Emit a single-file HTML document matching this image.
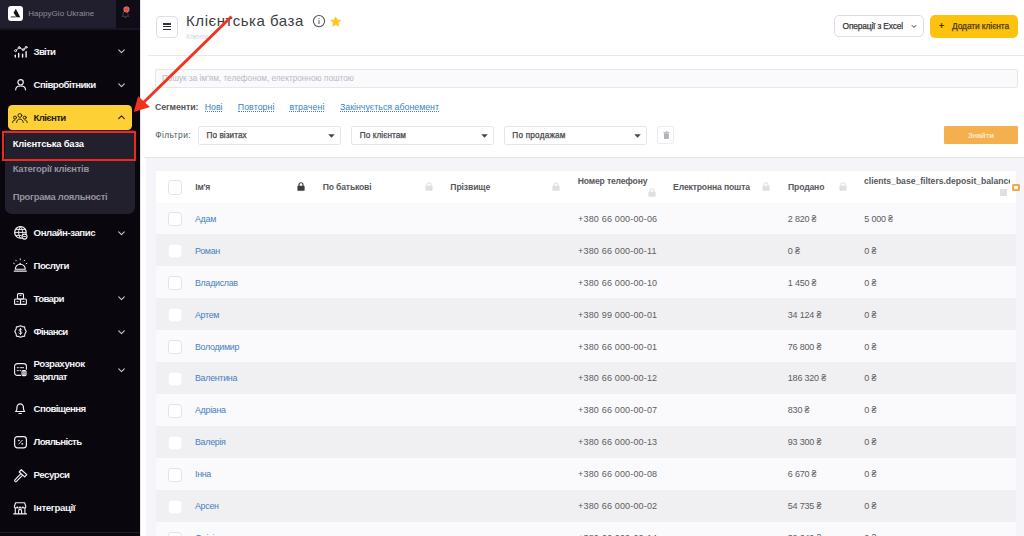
<!DOCTYPE html>
<html lang="uk">
<head>
<meta charset="utf-8">
<title>Клієнтська база</title>
<style>
*{box-sizing:border-box;margin:0;padding:0}
html,body{width:1024px;height:536px;overflow:hidden;background:#fff;font-family:"Liberation Sans",sans-serif}
body{position:relative}
.a,.t,svg{position:absolute}
.t{white-space:nowrap}
svg{overflow:visible}
</style>
</head>
<body>
<div class="a" style="left:140px;top:0px;width:1.2px;height:536px;background:#e2e2e8"></div>
<div class="a" style="left:155.5px;top:15.5px;width:22.5px;height:22.5px;border:1px solid #dedee3;border-radius:4px;background:#fff"></div>
<div class="a" style="left:163px;top:23.4px;width:7.6px;height:1.3px;background:#34343a"></div>
<div class="a" style="left:163px;top:26.2px;width:7.6px;height:1.3px;background:#34343a"></div>
<div class="a" style="left:163px;top:29px;width:7.6px;height:1.3px;background:#34343a"></div>
<svg style="left:312px;top:14px" width="14" height="14" viewBox="0 0 14 14"><circle cx="7" cy="7.1" r="5.6" fill="none" stroke="#55555b" stroke-width="1.1"/><rect x="6.5" y="6.2" width="1" height="3.8" fill="#55555b"/><rect x="6.5" y="4.1" width="1" height="1.1" fill="#55555b"/></svg>
<svg style="left:330.200px;top:15.600px" width="11.400" height="11.400" viewBox="0 0 24 24"><path d="M12 1.8l3.1 6.6 7.2.9-5.3 5 1.4 7.2L12 18l-6.4 3.500 1.4-7.2-5.3-5 7.200-.9z" fill="#fcc521" stroke="#fcc521" stroke-width="1.5" stroke-linejoin="round"/></svg>
<div class="a" style="left:833.8px;top:15.2px;width:90.4px;height:22.3px;border:1px solid #dcdce1;border-radius:5px;background:#fff"></div>
<svg style="left:910.5px;top:24px" width="6" height="5" viewBox="0 0 6 5"><path d="M0.8 1.2L3 3.4 5.2 1.2" fill="none" stroke="#38383e" stroke-width="1"/></svg>
<div class="a" style="left:929.9px;top:14.6px;width:88.2px;height:23.1px;border-radius:5px;background:#fdc20d"></div>
<div class="a" style="left:148px;top:55px;width:876px;height:1px;background:#e7e7ec"></div>
<div class="a" style="left:154.7px;top:68.5px;width:863.3px;height:19.2px;border:1px solid #e6e6eb;border-radius:2px;background:#fafafc"></div>
<div class="a" style="left:204.7px;top:111.2px;width:17.80000000000001px;height:0px;border-top:1px dotted #3b82c8"></div>
<div class="a" style="left:237.8px;top:111.2px;width:36.599999999999966px;height:0px;border-top:1px dotted #3b82c8"></div>
<div class="a" style="left:289.4px;top:111.2px;width:35.0px;height:0px;border-top:1px dotted #3b82c8"></div>
<div class="a" style="left:340px;top:111.2px;width:99px;height:0px;border-top:1px dotted #3b82c8"></div>
<div class="a" style="left:198.2px;top:125.6px;width:142.4px;height:19px;border:1px solid #e4e4e9;border-radius:2.5px;background:#fff"></div>
<svg style="left:327.6px;top:133.700px" width="7" height="3.800" viewBox="0 0 8 4"><path d="M0.3 0h7.400L4 4z" fill="#45454b"/></svg>
<div class="a" style="left:351.4px;top:125.6px;width:142.4px;height:19px;border:1px solid #e4e4e9;border-radius:2.5px;background:#fff"></div>
<svg style="left:480.79999999999995px;top:133.700px" width="7" height="3.800" viewBox="0 0 8 4"><path d="M0.3 0h7.400L4 4z" fill="#45454b"/></svg>
<div class="a" style="left:504.2px;top:125.6px;width:142.4px;height:19px;border:1px solid #e4e4e9;border-radius:2.5px;background:#fff"></div>
<svg style="left:633.6px;top:133.700px" width="7" height="3.800" viewBox="0 0 8 4"><path d="M0.3 0h7.400L4 4z" fill="#45454b"/></svg>
<div class="a" style="left:656.8px;top:126.3px;width:17.6px;height:18px;border:1px solid #ececf0;border-radius:2px;background:#fff"></div>
<svg style="left:662.600px;top:131px" width="6.800" height="8.200" viewBox="0 0 8 10"><path d="M1 2.800h6v6.200a.8.800 0 0 1-.8.800H1.800a.8.800 0 0 1-.8-.8z" fill="#b2b2b8"/><rect x="0.3" y="1.300" width="7.400" height="1" fill="#b2b2b8"/><rect x="2.800" y="0.4" width="2.400" height="1" fill="#b2b2b8"/></svg>
<div class="a" style="left:944px;top:125.7px;width:73.8px;height:18.5px;background:#f4b04f;border-radius:1px"></div>
<div class="a" style="left:144px;top:157px;width:880px;height:1px;background:#e5e5ea"></div>
<div class="a" style="left:146px;top:158px;width:878px;height:378px;background:#f4f4f9"></div>
<div class="a" style="left:156px;top:170.6px;width:860px;height:366px;background:#fff"></div>
<div class="a" style="left:156px;top:202px;width:860px;height:32px;background:#faf9fc"></div>
<div class="a" style="left:156px;top:234px;width:860px;height:32px;background:#f0eff1"></div>
<div class="a" style="left:156px;top:266px;width:860px;height:32px;background:#faf9fc"></div>
<div class="a" style="left:156px;top:298px;width:860px;height:32px;background:#f0eff1"></div>
<div class="a" style="left:156px;top:330px;width:860px;height:32px;background:#faf9fc"></div>
<div class="a" style="left:156px;top:362px;width:860px;height:32px;background:#f0eff1"></div>
<div class="a" style="left:156px;top:394px;width:860px;height:32px;background:#faf9fc"></div>
<div class="a" style="left:156px;top:426px;width:860px;height:32px;background:#f0eff1"></div>
<div class="a" style="left:156px;top:458px;width:860px;height:32px;background:#faf9fc"></div>
<div class="a" style="left:156px;top:490px;width:860px;height:32px;background:#f0eff1"></div>
<div class="a" style="left:156px;top:522px;width:860px;height:32px;background:#faf9fc"></div>
<div class="a" style="left:156px;top:170.6px;width:860px;height:32.6px;background:#fff"></div>
<div class="a" style="left:167.9px;top:180.1px;width:14.5px;height:14.5px;border:1px solid #e3e0ea;border-radius:3.5px;background:#fff"></div>
<div class="a" style="left:168px;top:212px;width:14.3px;height:14.3px;border:1px solid #e3e0ea;border-radius:3.5px;background:#fff"></div>
<div class="a" style="left:168px;top:244px;width:14.3px;height:14.3px;border:1px solid #f3f3f5;border-radius:3.5px;background:#fff"></div>
<div class="a" style="left:168px;top:276px;width:14.3px;height:14.3px;border:1px solid #e3e0ea;border-radius:3.5px;background:#fff"></div>
<div class="a" style="left:168px;top:308px;width:14.3px;height:14.3px;border:1px solid #f3f3f5;border-radius:3.5px;background:#fff"></div>
<div class="a" style="left:168px;top:340px;width:14.3px;height:14.3px;border:1px solid #e3e0ea;border-radius:3.5px;background:#fff"></div>
<div class="a" style="left:168px;top:372px;width:14.3px;height:14.3px;border:1px solid #f3f3f5;border-radius:3.5px;background:#fff"></div>
<div class="a" style="left:168px;top:404px;width:14.3px;height:14.3px;border:1px solid #e3e0ea;border-radius:3.5px;background:#fff"></div>
<div class="a" style="left:168px;top:436px;width:14.3px;height:14.3px;border:1px solid #f3f3f5;border-radius:3.5px;background:#fff"></div>
<div class="a" style="left:168px;top:468px;width:14.3px;height:14.3px;border:1px solid #e3e0ea;border-radius:3.5px;background:#fff"></div>
<div class="a" style="left:168px;top:500px;width:14.3px;height:14.3px;border:1px solid #f3f3f5;border-radius:3.5px;background:#fff"></div>
<div class="a" style="left:168px;top:532px;width:14.3px;height:14.3px;border:1px solid #e3e0ea;border-radius:3.5px;background:#fff"></div>
<svg style="left:297.1px;top:182.3px" width="8" height="9" viewBox="0 0 8 9"><rect x="0.4" y="3.800" width="7.200" height="5" rx="0.9" fill="#3c3c42"/><path d="M2 4.200V2.700a2 2 0 0 1 4 0V4.200" fill="none" stroke="#3c3c42" stroke-width="1.150"/></svg>
<svg style="left:424.6px;top:182.3px" width="8" height="9" viewBox="0 0 8 9"><rect x="0.4" y="3.800" width="7.200" height="5" rx="0.9" fill="#dfdfe3"/><path d="M2 4.200V2.700a2 2 0 0 1 4 0V4.200" fill="none" stroke="#dfdfe3" stroke-width="1.150"/></svg>
<svg style="left:552.2px;top:182.3px" width="8" height="9" viewBox="0 0 8 9"><rect x="0.4" y="3.800" width="7.200" height="5" rx="0.9" fill="#dfdfe3"/><path d="M2 4.200V2.700a2 2 0 0 1 4 0V4.200" fill="none" stroke="#dfdfe3" stroke-width="1.150"/></svg>
<svg style="left:647.8px;top:188px" width="8" height="9" viewBox="0 0 8 9"><rect x="0.4" y="3.800" width="7.200" height="5" rx="0.9" fill="#dfdfe3"/><path d="M2 4.200V2.700a2 2 0 0 1 4 0V4.200" fill="none" stroke="#dfdfe3" stroke-width="1.150"/></svg>
<svg style="left:762.3px;top:182.3px" width="8" height="9" viewBox="0 0 8 9"><rect x="0.4" y="3.800" width="7.200" height="5" rx="0.9" fill="#dfdfe3"/><path d="M2 4.200V2.700a2 2 0 0 1 4 0V4.200" fill="none" stroke="#dfdfe3" stroke-width="1.150"/></svg>
<svg style="left:838.6px;top:182.3px" width="8" height="9" viewBox="0 0 8 9"><rect x="0.4" y="3.800" width="7.200" height="5" rx="0.9" fill="#dfdfe3"/><path d="M2 4.200V2.700a2 2 0 0 1 4 0V4.200" fill="none" stroke="#dfdfe3" stroke-width="1.150"/></svg>
<div class="a" style="left:1000px;top:188.6px;width:7px;height:7px;background:#e0e0e4"></div>
<div class="a" style="left:1012.4px;top:184px;width:7.4px;height:7px;border:2.700px solid #f0a848;background:#fff;border-radius:1.5px"></div>
<div class="t" style="left:186.1px;top:10px;font-size:15px;line-height:21px;color:#3c3c42;letter-spacing:0.527px;">Клієнтська база</div>
<div class="t" style="left:186px;top:32px;font-size:7px;line-height:10px;color:#d4d4dc;letter-spacing:-0.380px;">Клієнти</div>
<div class="t" style="left:842.6px;top:20px;font-size:8.4px;line-height:12px;color:#38383e;letter-spacing:-0.166px;-webkit-text-stroke:0.25px #38383e;">Операції з Excel</div>
<div class="t" style="left:938.8px;top:19px;font-size:9.5px;line-height:13px;color:#3d3005;font-weight:bold;">+</div>
<div class="t" style="left:952px;top:20px;font-size:8.4px;line-height:12px;color:#4a3b08;letter-spacing:-0.081px;-webkit-text-stroke:0.25px #4a3b08;">Додати клієнта</div>
<div class="t" style="left:161.9px;top:73px;font-size:8.2px;line-height:11px;color:#b9b9c1;letter-spacing:0.024px;">Пошук за ім'ям, телефоном, електронною поштою</div>
<div class="t" style="left:155px;top:101px;font-size:8.8px;line-height:12px;color:#55555b;font-weight:bold;letter-spacing:-0.110px;">Сегменти:</div>
<div class="t" style="left:204.7px;top:101px;font-size:8.8px;line-height:12px;color:#3b82c8;letter-spacing:-0.025px;">Нові</div>
<div class="t" style="left:237.8px;top:101px;font-size:8.8px;line-height:12px;color:#3b82c8;letter-spacing:0.052px;">Повторні</div>
<div class="t" style="left:289.4px;top:101px;font-size:8.8px;line-height:12px;color:#3b82c8;letter-spacing:0.087px;">втрачені</div>
<div class="t" style="left:340px;top:101px;font-size:8.8px;line-height:12px;color:#3b82c8;">Закінчується абонемент</div>
<div class="t" style="left:155.2px;top:129px;font-size:8.4px;line-height:12px;color:#55555b;letter-spacing:0.439px;">Фільтри:</div>
<div class="t" style="left:206.6px;top:130px;font-size:8.2px;line-height:11px;color:#47474d;letter-spacing:0.054px;-webkit-text-stroke:0.25px #47474d;">По візитах</div>
<div class="t" style="left:359.7px;top:130px;font-size:8.2px;line-height:11px;color:#47474d;letter-spacing:0.077px;-webkit-text-stroke:0.25px #47474d;">По клієнтам</div>
<div class="t" style="left:512.3px;top:130px;font-size:8.2px;line-height:11px;color:#47474d;letter-spacing:0.212px;-webkit-text-stroke:0.25px #47474d;">По продажам</div>
<div class="t" style="left:968px;top:130px;font-size:7.8px;line-height:11px;color:#fbe5c4;font-weight:bold;letter-spacing:-0.269px;">Знайти</div>
<div class="t" style="left:195.3px;top:181px;font-size:8.6px;line-height:12px;color:#58585e;font-weight:bold;letter-spacing:-0.304px;">Ім'я</div>
<div class="t" style="left:322.8px;top:181px;font-size:8.6px;line-height:12px;color:#58585e;font-weight:bold;letter-spacing:-0.172px;">По батькові</div>
<div class="t" style="left:450.3px;top:181px;font-size:8.6px;line-height:12px;color:#58585e;font-weight:bold;letter-spacing:-0.098px;">Прізвище</div>
<div class="t" style="left:577.8px;top:175px;font-size:8.6px;line-height:12px;color:#58585e;font-weight:bold;letter-spacing:-0.166px;">Номер телефону</div>
<div class="t" style="left:673.1px;top:181px;font-size:8.6px;line-height:12px;color:#58585e;font-weight:bold;letter-spacing:-0.141px;">Електронна пошта</div>
<div class="t" style="left:788.1px;top:181px;font-size:8.6px;line-height:12px;color:#58585e;font-weight:bold;letter-spacing:-0.158px;">Продано</div>
<div class="t" style="left:864px;top:175px;font-size:8.6px;line-height:12px;color:#58585e;font-weight:bold;letter-spacing:-0.015px;width:145.7px;overflow:hidden;">clients_base_filters.deposit_balance</div>
<div class="t" style="left:195px;top:213px;font-size:8.9px;line-height:12px;color:#4583c2;letter-spacing:-0.300px;">Адам</div>
<div class="t" style="left:578.1px;top:213px;font-size:9px;line-height:13px;color:#5d5d63;letter-spacing:0.170px;">+380 66 000-00-06</div>
<div class="t" style="left:787.8px;top:213px;font-size:9px;line-height:13px;color:#5d5d63;letter-spacing:-0.200px;">2 820 ₴</div>
<div class="t" style="left:864.3px;top:213px;font-size:9px;line-height:13px;color:#5d5d63;letter-spacing:-0.200px;">5 000 ₴</div>
<div class="t" style="left:195px;top:245px;font-size:8.9px;line-height:12px;color:#4583c2;letter-spacing:-0.300px;">Роман</div>
<div class="t" style="left:578.1px;top:245px;font-size:9px;line-height:13px;color:#5d5d63;letter-spacing:0.170px;">+380 66 000-00-11</div>
<div class="t" style="left:787.8px;top:245px;font-size:9px;line-height:13px;color:#5d5d63;letter-spacing:-0.200px;">0 ₴</div>
<div class="t" style="left:864.3px;top:245px;font-size:9px;line-height:13px;color:#5d5d63;letter-spacing:-0.200px;">0 ₴</div>
<div class="t" style="left:195px;top:277px;font-size:8.9px;line-height:12px;color:#4583c2;letter-spacing:-0.300px;">Владислав</div>
<div class="t" style="left:578.1px;top:277px;font-size:9px;line-height:13px;color:#5d5d63;letter-spacing:0.170px;">+380 66 000-00-10</div>
<div class="t" style="left:787.8px;top:277px;font-size:9px;line-height:13px;color:#5d5d63;letter-spacing:-0.200px;">1 450 ₴</div>
<div class="t" style="left:864.3px;top:277px;font-size:9px;line-height:13px;color:#5d5d63;letter-spacing:-0.200px;">0 ₴</div>
<div class="t" style="left:195px;top:309px;font-size:8.9px;line-height:12px;color:#4583c2;letter-spacing:-0.300px;">Артем</div>
<div class="t" style="left:578.1px;top:309px;font-size:9px;line-height:13px;color:#5d5d63;letter-spacing:0.170px;">+380 99 000-00-01</div>
<div class="t" style="left:787.8px;top:309px;font-size:9px;line-height:13px;color:#5d5d63;letter-spacing:-0.200px;">34 124 ₴</div>
<div class="t" style="left:864.3px;top:309px;font-size:9px;line-height:13px;color:#5d5d63;letter-spacing:-0.200px;">0 ₴</div>
<div class="t" style="left:195px;top:341px;font-size:8.9px;line-height:12px;color:#4583c2;letter-spacing:-0.300px;">Володимир</div>
<div class="t" style="left:578.1px;top:341px;font-size:9px;line-height:13px;color:#5d5d63;letter-spacing:0.170px;">+380 66 000-00-01</div>
<div class="t" style="left:787.8px;top:341px;font-size:9px;line-height:13px;color:#5d5d63;letter-spacing:-0.200px;">76 800 ₴</div>
<div class="t" style="left:864.3px;top:341px;font-size:9px;line-height:13px;color:#5d5d63;letter-spacing:-0.200px;">0 ₴</div>
<div class="t" style="left:195px;top:372px;font-size:8.9px;line-height:12px;color:#4583c2;letter-spacing:-0.300px;">Валентина</div>
<div class="t" style="left:578.1px;top:372px;font-size:9px;line-height:13px;color:#5d5d63;letter-spacing:0.170px;">+380 66 000-00-12</div>
<div class="t" style="left:787.8px;top:372px;font-size:9px;line-height:13px;color:#5d5d63;letter-spacing:-0.200px;">186 320 ₴</div>
<div class="t" style="left:864.3px;top:372px;font-size:9px;line-height:13px;color:#5d5d63;letter-spacing:-0.200px;">0 ₴</div>
<div class="t" style="left:195px;top:404px;font-size:8.9px;line-height:12px;color:#4583c2;letter-spacing:-0.300px;">Адріана</div>
<div class="t" style="left:578.1px;top:404px;font-size:9px;line-height:13px;color:#5d5d63;letter-spacing:0.170px;">+380 66 000-00-07</div>
<div class="t" style="left:787.8px;top:404px;font-size:9px;line-height:13px;color:#5d5d63;letter-spacing:-0.200px;">830 ₴</div>
<div class="t" style="left:864.3px;top:404px;font-size:9px;line-height:13px;color:#5d5d63;letter-spacing:-0.200px;">0 ₴</div>
<div class="t" style="left:195px;top:436px;font-size:8.9px;line-height:12px;color:#4583c2;letter-spacing:-0.300px;">Валерія</div>
<div class="t" style="left:578.1px;top:436px;font-size:9px;line-height:13px;color:#5d5d63;letter-spacing:0.170px;">+380 66 000-00-13</div>
<div class="t" style="left:787.8px;top:436px;font-size:9px;line-height:13px;color:#5d5d63;letter-spacing:-0.200px;">93 300 ₴</div>
<div class="t" style="left:864.3px;top:436px;font-size:9px;line-height:13px;color:#5d5d63;letter-spacing:-0.200px;">0 ₴</div>
<div class="t" style="left:195px;top:468px;font-size:8.9px;line-height:12px;color:#4583c2;letter-spacing:-0.300px;">Інна</div>
<div class="t" style="left:578.1px;top:468px;font-size:9px;line-height:13px;color:#5d5d63;letter-spacing:0.170px;">+380 66 000-00-08</div>
<div class="t" style="left:787.8px;top:468px;font-size:9px;line-height:13px;color:#5d5d63;letter-spacing:-0.200px;">6 670 ₴</div>
<div class="t" style="left:864.3px;top:468px;font-size:9px;line-height:13px;color:#5d5d63;letter-spacing:-0.200px;">0 ₴</div>
<div class="t" style="left:195px;top:500px;font-size:8.9px;line-height:12px;color:#4583c2;letter-spacing:-0.300px;">Арсен</div>
<div class="t" style="left:578.1px;top:500px;font-size:9px;line-height:13px;color:#5d5d63;letter-spacing:0.170px;">+380 66 000-00-02</div>
<div class="t" style="left:787.8px;top:500px;font-size:9px;line-height:13px;color:#5d5d63;letter-spacing:-0.200px;">54 735 ₴</div>
<div class="t" style="left:864.3px;top:500px;font-size:9px;line-height:13px;color:#5d5d63;letter-spacing:-0.200px;">0 ₴</div>
<div class="t" style="left:195px;top:532px;font-size:8.9px;line-height:12px;color:#4583c2;letter-spacing:-0.300px;">Олівія</div>
<div class="t" style="left:578.1px;top:532px;font-size:9px;line-height:13px;color:#5d5d63;letter-spacing:0.170px;">+380 66 000-00-14</div>
<div class="t" style="left:787.8px;top:532px;font-size:9px;line-height:13px;color:#5d5d63;letter-spacing:-0.200px;">32 640 ₴</div>
<div class="t" style="left:864.3px;top:532px;font-size:9px;line-height:13px;color:#5d5d63;letter-spacing:-0.200px;">0 ₴</div>
<div class="a" style="left:0px;top:0px;width:140px;height:536px;background:#09070d"></div>
<div class="a" style="left:0px;top:0px;width:116px;height:28px;background:#211f2e"></div>
<div class="a" style="left:116px;top:0px;width:24px;height:28px;background:#0f0c15"></div>
<div class="a" style="left:0px;top:28px;width:140px;height:1.5px;background:#17151e"></div>
<div class="a" style="left:7.6px;top:5.5px;width:15.5px;height:15.5px;background:#fff;border-radius:3.2px"></div>
<svg style="left:7.600px;top:5.500px" width="15.500" height="15.500" viewBox="0 0 15.500 15.500"><path d="M7.800 2.700L12.300 11.300H8.500L5.600 6.700z" fill="#15131c"/><rect x="2.800" y="10.500" width="5" height=".85" fill="#15131c"/></svg>
<svg style="left:120.500px;top:9.500px" width="9" height="9" viewBox="0 0 9 9"><path d="M1.200 6.300c.9-.6.900-1.600.9-2.700a2.400 2.400 0 0 1 4.800 0c0 1.100 0 2.100.9 2.700z" fill="none" stroke="#4b4959" stroke-width=".9" stroke-linejoin="round"/><path d="M3.700 7.700h1.600" stroke="#4b4959" stroke-width=".9"/></svg>
<div class="a" style="left:124.2px;top:7.1px;width:4.8px;height:4.8px;background:#f2463b;border-radius:50%;box-shadow:0 0 0 0.400px #cbb9a8"></div>
<div class="a" style="left:8px;top:105.4px;width:124.2px;height:24.8px;border-radius:4.500px;background:#fdd035"></div>
<div class="a" style="left:5.2px;top:130.2px;width:129.6px;height:83.5px;border-radius:0 0 7px 7px;background:#22202c"></div>
<div class="a" style="left:0px;top:532px;width:140px;height:1px;background:#201e28"></div>
<svg style="left:117.500px;top:49.0px" width="7" height="4.600" viewBox="0 0 7 4.600"><path d="M0.700 0.900L3.500 3.700 6.300 0.900" fill="none" stroke="#c9c9d1" stroke-width="1.100" stroke-linecap="round" stroke-linejoin="round"/></svg>
<svg style="left:117.500px;top:82.9px" width="7" height="4.600" viewBox="0 0 7 4.600"><path d="M0.700 0.900L3.500 3.700 6.300 0.900" fill="none" stroke="#c9c9d1" stroke-width="1.100" stroke-linecap="round" stroke-linejoin="round"/></svg>
<svg style="left:117.500px;top:230.5px" width="7" height="4.600" viewBox="0 0 7 4.600"><path d="M0.700 0.900L3.500 3.700 6.300 0.900" fill="none" stroke="#c9c9d1" stroke-width="1.100" stroke-linecap="round" stroke-linejoin="round"/></svg>
<svg style="left:117.500px;top:296.4px" width="7" height="4.600" viewBox="0 0 7 4.600"><path d="M0.700 0.900L3.500 3.700 6.300 0.900" fill="none" stroke="#c9c9d1" stroke-width="1.100" stroke-linecap="round" stroke-linejoin="round"/></svg>
<svg style="left:117.500px;top:329.7px" width="7" height="4.600" viewBox="0 0 7 4.600"><path d="M0.700 0.900L3.500 3.700 6.300 0.900" fill="none" stroke="#c9c9d1" stroke-width="1.100" stroke-linecap="round" stroke-linejoin="round"/></svg>
<svg style="left:117.500px;top:367.7px" width="7" height="4.600" viewBox="0 0 7 4.600"><path d="M0.700 0.900L3.500 3.700 6.300 0.900" fill="none" stroke="#c9c9d1" stroke-width="1.100" stroke-linecap="round" stroke-linejoin="round"/></svg>
<svg style="left:117.500px;top:115.3px" width="7" height="4.600" viewBox="0 0 7 4.600"><path d="M0.700 3.700L3.500 0.900 6.300 3.700" fill="none" stroke="#2b2408" stroke-width="1.100" stroke-linecap="round" stroke-linejoin="round"/></svg>
<svg style="left:13.6px;top:45.6px" width="13.4" height="11.6" viewBox="0 0 13.400 11.600" fill="none" stroke="#f2f2f5" stroke-width="1.1" stroke-linecap="round" stroke-linejoin="round"><path d="M1.300 11.100V9.100M4.700 11.100V7.500M8.600 11.100V8.300M12.100 11.100V5.800" stroke-width="1.400"/><path d="M2.300 4.100L4.500 2.200M5.900 2.100L8.500 3.400M9.900 3.100L11.500 1.800" stroke-width=".9"/><circle cx="1.600" cy="4.700" r="1" stroke-width=".9"/><circle cx="5.200" cy="1.600" r="1" stroke-width=".9"/><circle cx="9.200" cy="3.700" r="1" stroke-width=".9"/><circle cx="12.100" cy="1.300" r="1" stroke-width=".9"/></svg>
<svg style="left:15px;top:79.2px" width="11.2" height="11.4" viewBox="0 0 11.200 11.400" fill="none" stroke="#f2f2f5" stroke-width="1.2" stroke-linecap="round" stroke-linejoin="round"><circle cx="5.600" cy="3.300" r="2.700"/><path d="M0.700 10.800c0-2.500 2-3.800 4.900-3.800s4.900 1.300 4.900 3.800"/></svg>
<svg style="left:12.4px;top:112.7px" width="15.8" height="10" viewBox="0 0 15.800 10" fill="none" stroke="#2b2408" stroke-width="1" stroke-linecap="round" stroke-linejoin="round"><circle cx="7.900" cy="2.500" r="1.900"/><circle cx="3" cy="4.600" r="1.500"/><circle cx="12.800" cy="4.600" r="1.500"/><path d="M4.600 9.500c0-2.100 1.400-3.400 3.300-3.400s3.300 1.300 3.300 3.400M0.600 9.500c0-1.500.9-2.400 2.300-2.500M15.200 9.500c0-1.500-.9-2.400-2.300-2.500"/></svg>
<svg style="left:13.8px;top:226.2px" width="13.6" height="13.6" viewBox="0 0 13.600 13.600" fill="none" stroke="#f2f2f5" stroke-width="1" stroke-linecap="round" stroke-linejoin="round"><path d="M12.100 7.600A5.800 5.800 0 1 0 7.400 12.100" stroke-width="1.250"/><path d="M0.900 6.400h11M1.800 3.400h9.100M1.800 9.400h5.200M6.300 0.800c-2.300 2.200-2.300 8.800 0 11.200M6.300 0.800c2 1.900 2.500 4.200 2.400 6.400" stroke-width=".95"/><circle cx="10.500" cy="10.600" r="2.500" fill="#09070d" stroke-width="1.150"/><path d="M9.500 10.600h2" stroke-width="1"/></svg>
<svg style="left:13.3px;top:258px" width="14.5" height="14" viewBox="0 0 14.500 14" fill="none" stroke="#f2f2f5" stroke-width="1.1" stroke-linecap="round" stroke-linejoin="round"><path d="M2.300 11.200a5 5 0 0 1 10 0z"/><path d="M1.300 13.100h12" stroke-width="1.400"/><path d="M7.250 6.200V5.300" /><path d="M7.250 1.800V0.800M3.400 2.900l-.6-.7M11.100 2.900l.6-.7M1.400 5.700l-.8-.4M13.100 5.700l.8-.4" stroke-width=".9"/></svg>
<svg style="left:14px;top:293px" width="13" height="12" viewBox="0 0 13 12" fill="none" stroke="#f2f2f5" stroke-width="1.1" stroke-linecap="round" stroke-linejoin="round"><rect x="3.500" y="0.600" width="6" height="5.400" rx="1"/><rect x="0.600" y="6" width="5.900" height="5.400" rx="1"/><rect x="6.500" y="6" width="5.900" height="5.400" rx="1"/><path d="M5.900 2.400h1.200M2.900 8.600h1.200M8.900 8.600h1.200" stroke-width=".9"/></svg>
<svg style="left:13.8px;top:325.4px" width="13" height="13" viewBox="0 0 13 13" fill="none" stroke="#f2f2f5" stroke-width="1.1" stroke-linecap="round" stroke-linejoin="round"><path d="M6.500 0.700l2 .9 2.100.3.300 2.100 1.300 2.500-1.300 2.500-.3 2.100-2.100.3-2 .9-2-.9-2.100-.3-.3-2.100L0.800 6.500l1.300-2.500.3-2.100 2.100-.3z"/><path d="M7.800 4.900c-.3-.6-.8-.8-1.400-.8-.8 0-1.400.4-1.400 1.100 0 1.600 2.900.8 2.900 2.500 0 .7-.6 1.100-1.400 1.100-.7 0-1.300-.3-1.600-.9M6.500 3.300v6.400" stroke-width=".85"/></svg>
<svg style="left:14px;top:363.3px" width="13" height="13.6" viewBox="0 0 13 13.600" fill="none" stroke="#f2f2f5" stroke-width="1.1" stroke-linecap="round" stroke-linejoin="round"><path d="M6.500 12.400H3.300A2.700 2.700 0 0 1 .6 9.700V3.300A2.700 2.700 0 0 1 3.300.6h6.400A2.700 2.700 0 0 1 12.400 3.300v2.900"/><path d="M3.200 4.700h1.200M6 4.700h3.600M3.200 7.600h1.200M6 7.600h.8" stroke-width=".95"/><rect x="7.400" y="6.900" width="5.300" height="6.400" rx="1.800" fill="#f2f2f5" stroke="none"/><path d="M7.800 9.100h4.500M7.800 11h4.500" stroke="#09070d" stroke-width=".6"/></svg>
<svg style="left:15px;top:402.2px" width="10.4" height="12.2" viewBox="0 0 10.400 12.200" fill="none" stroke="#f2f2f5" stroke-width="1.2" stroke-linecap="round" stroke-linejoin="round"><path d="M0.700 9.500c1.400-1 1.300-2.400 1.300-4.400a3.200 3.200 0 0 1 6.400 0c0 2-.1 3.400 1.300 4.400z"/><path d="M4 11.500h2.400"/></svg>
<svg style="left:14px;top:435.5px" width="13" height="12.4" viewBox="0 0 13 12.400" fill="none" stroke="#f2f2f5" stroke-width="1.2" stroke-linecap="round" stroke-linejoin="round"><rect x="0.600" y="0.600" width="11.800" height="11.200" rx="2.800"/><path d="M8.300 4.300L4.700 8.100" stroke-width=".9"/><circle cx="4.800" cy="4.500" r=".55" fill="#f2f2f5" stroke-width=".5"/><circle cx="8.200" cy="7.900" r=".55" fill="#f2f2f5" stroke-width=".5"/></svg>
<svg style="left:13.6px;top:468.5px" width="13.4" height="13" viewBox="0 0 13.400 13" fill="none" stroke="#f2f2f5" stroke-width="1.15" stroke-linecap="round" stroke-linejoin="round"><path d="M6.700 4.800L0.900 10.900a1.100 1.100 0 0 0 1.600 1.500L8.500 6.400"/><path d="M7.300 0.700L12.800 5.600 10.700 7.900 5.200 3z"/></svg>
<svg style="left:13.3px;top:501.6px" width="14.2" height="12.6" viewBox="0 0 14.200 12.600" fill="none" stroke="#f2f2f5" stroke-width="1.1" stroke-linecap="round" stroke-linejoin="round"><path d="M1.400 4.300L2.600 0.700h9L12.800 4.300v.5a1.450 1.450 0 0 1-2.850 0 1.450 1.450 0 0 1-2.850 0 1.450 1.450 0 0 1-2.850 0 1.450 1.450 0 0 1-2.850 0z"/><path d="M2.300 6v5.800M11.900 6v5.800M0.700 11.900h12.800M5.600 11.800V8.900a1.500 1.500 0 0 1 3 0v2.900"/></svg>
<div class="t" style="left:28.3px;top:8px;font-size:8px;line-height:11px;color:#8f8e9c;letter-spacing:0.035px;">HappyGio Ukraine</div>
<div class="t" style="left:33.6px;top:45px;font-size:9.7px;line-height:14px;color:#f2f2f5;font-weight:bold;letter-spacing:-0.755px;">Звіти</div>
<div class="t" style="left:33.6px;top:78px;font-size:9.7px;line-height:14px;color:#f2f2f5;font-weight:bold;letter-spacing:-0.572px;">Співробітники</div>
<div class="t" style="left:33.6px;top:111px;font-size:9.7px;line-height:14px;color:#2b2408;font-weight:bold;letter-spacing:-0.662px;">Клієнти</div>
<div class="t" style="left:12.7px;top:137px;font-size:9.4px;line-height:13px;color:#ffffff;font-weight:bold;letter-spacing:-0.190px;">Клієнтська база</div>
<div class="t" style="left:12.7px;top:162px;font-size:9.4px;line-height:13px;color:#9593a0;font-weight:bold;letter-spacing:-0.271px;">Категорії клієнтів</div>
<div class="t" style="left:12.7px;top:190px;font-size:9.4px;line-height:13px;color:#9593a0;font-weight:bold;letter-spacing:-0.276px;">Програма лояльності</div>
<div class="t" style="left:33.6px;top:226px;font-size:9.7px;line-height:14px;color:#f2f2f5;font-weight:bold;letter-spacing:-0.476px;">Онлайн-запис</div>
<div class="t" style="left:33.6px;top:259px;font-size:9.7px;line-height:14px;color:#f2f2f5;font-weight:bold;letter-spacing:-0.624px;">Послуги</div>
<div class="t" style="left:33.6px;top:292px;font-size:9.7px;line-height:14px;color:#f2f2f5;font-weight:bold;letter-spacing:-0.702px;">Товари</div>
<div class="t" style="left:33.6px;top:325px;font-size:9.7px;line-height:14px;color:#f2f2f5;font-weight:bold;letter-spacing:-0.784px;">Фінанси</div>
<div class="t" style="left:33.6px;top:357px;font-size:9.7px;line-height:14px;color:#f2f2f5;font-weight:bold;letter-spacing:-0.473px;">Розрахунок</div>
<div class="t" style="left:33.6px;top:370px;font-size:9.7px;line-height:14px;color:#f2f2f5;font-weight:bold;letter-spacing:-0.690px;">зарплат</div>
<div class="t" style="left:33.6px;top:402px;font-size:9.7px;line-height:14px;color:#f2f2f5;font-weight:bold;letter-spacing:-0.638px;">Сповіщення</div>
<div class="t" style="left:33.6px;top:435px;font-size:9.7px;line-height:14px;color:#f2f2f5;font-weight:bold;letter-spacing:-0.720px;">Лояльність</div>
<div class="t" style="left:33.6px;top:468px;font-size:9.7px;line-height:14px;color:#f2f2f5;font-weight:bold;letter-spacing:-0.498px;">Ресурси</div>
<div class="t" style="left:33.6px;top:501px;font-size:9.7px;line-height:14px;color:#f2f2f5;font-weight:bold;letter-spacing:-0.377px;">Інтеграції</div>
<div class="a" style="left:2.4px;top:131.4px;width:133.2px;height:29.4px;border:2.500px solid #ee2a1e"></div>
<svg style="left:0;top:0" width="1024" height="536" viewBox="0 0 1024 536"><path d="M231.5 16.5L143 103" stroke="#f3311f" stroke-width="2.900" fill="none"/><path d="M133.800 112L138.100 96.200 150 106.900z" fill="#f3311f"/></svg>
</body>
</html>
